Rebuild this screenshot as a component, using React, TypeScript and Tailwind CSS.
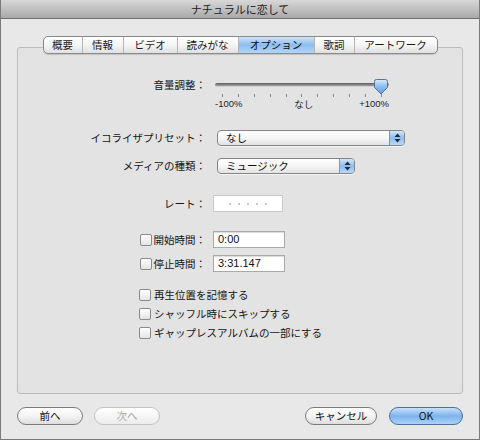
import React from "react";

const tabs = ["概要", "情報", "ビデオ", "読みがな", "オプション", "歌詞", "アートワーク"];
const tabWidths = [38, 41, 54, 61, 76, 40, 83];

function Checkbox() {
  return (
    <span className="inline-block w-[12px] h-[12px] shrink-0 rounded-[2px] border border-[#8a8a8a] bg-gradient-to-b from-white to-[#e4e4e4] shadow-[inset_0_1px_0_#fff]" />
  );
}

function Arrows() {
  return (
    <svg width="7" height="10" viewBox="0 0 7 10">
      <path d="M3.5 0.5 L6.5 4 H0.5 Z" fill="#1d2b3d" />
      <path d="M3.5 9.5 L6.5 6 H0.5 Z" fill="#1d2b3d" />
    </svg>
  );
}

function Popup({ width, value }: { width: string; value: string }) {
  return (
    <div className={`${width} h-[16px] flex rounded-[4px] border border-[#858585] bg-gradient-to-b from-white via-[#f6f6f6] to-[#e2e2e2] overflow-hidden shadow-[0_1px_0_#f5f5f5]`}>
      <span className="flex-1 pl-[8px] text-[10.5px] leading-[14px] text-[#111]">{value}</span>
      <span className="w-[15px] flex items-center justify-center border-l border-[#7d96b4] bg-gradient-to-b from-[#d3e6fa] via-[#8fbcec] to-[#b9d9f8]">
        <Arrows />
      </span>
    </div>
  );
}

function Knob() {
  return (
    <svg width="14" height="16" viewBox="0 0 14 16">
      <defs>
        <linearGradient id="kb" x1="0" y1="0" x2="0" y2="1">
          <stop offset="0" stopColor="#dcebfb" />
          <stop offset="0.5" stopColor="#8cbcee" />
          <stop offset="1" stopColor="#5c9de4" />
        </linearGradient>
      </defs>
      <path d="M2.5 0.5 H11.5 Q13.5 0.5 13.5 2.5 V8.5 L7 15 L0.5 8.5 V2.5 Q0.5 0.5 2.5 0.5 Z" fill="url(#kb)" stroke="#53739a" />
    </svg>
  );
}

function Button({ label, variant }: { label: string; variant?: "default" | "disabled" | "primary" }) {
  const base = "h-[18px] rounded-full flex items-center justify-center text-[10.5px] border";
  const cls =
    variant === "primary"
      ? "border-[#4f6f98] bg-gradient-to-b from-[#c8e1fa] via-[#7eb4ec] to-[#a9d2f8] text-[#111]"
      : variant === "disabled"
      ? "border-[#c4c4c4] bg-gradient-to-b from-white to-[#ececec] text-[#a8a8a8]"
      : "border-[#7b7b7b] bg-gradient-to-b from-white via-[#f4f4f4] to-[#dedede] text-[#111]";
  return <div className={`${base} ${cls}`}>{label}</div>;
}

export default function App() {
  return (
    <div className="w-[480px] h-[441px] bg-white font-['Noto_Sans_CJK_JP','Noto_Sans',sans-serif] text-[#141414]">
      <div className="h-[440px] flex flex-col border border-t-0 border-[#7a7a7a] bg-[#e8e8e8]">
        <div className="h-[19px] shrink-0 flex items-center justify-center bg-gradient-to-b from-[#d8d8d8] to-[#a9a9a9] border-b border-[#6f6f6f] text-[11px] text-[#222]">
          ナチュラルに恋して
        </div>

        <div className="px-[16px]">
          <div className="mt-[28px] h-[347px] rounded-[3px] border border-[#bdbdbd] bg-[#e3e3e3] flex flex-col">
            {/* tabs */}
            <div className="-mt-[12px] flex justify-center">
              <div className="flex h-[18px] rounded-[5px] border border-[#8a8a8a] overflow-hidden bg-gradient-to-b from-white via-[#f5f5f5] to-[#e0e0e0] shadow-[0_1px_1px_rgba(0,0,0,0.15)]">
                {tabs.map((t, i) => (
                  <div
                    key={t}
                    style={{ width: tabWidths[i] }}
                    className={`flex items-center justify-center text-[10.5px] ${i > 0 ? "border-l border-[#b5b5b5]" : ""} ${
                      t === "オプション" ? "bg-gradient-to-b from-[#cfe4fa] via-[#8dbdee] to-[#b3d6f8] text-[#0d0d0d]" : "text-[#1a1a1a]"
                    }`}
                  >
                    {t}
                  </div>
                ))}
              </div>
            </div>

            {/* volume */}
            <div className="mt-[23px] flex">
              <div className="w-[188px] h-[16px] flex items-center justify-end text-[10.5px]">音量調整：</div>
              <div className="ml-[9px] w-[174px] relative">
                <div className="h-[16px] flex items-center">
                  <div className="w-full h-[4px] rounded-full bg-gradient-to-b from-[#5d5d5d] to-[#a3a3a3] border-b border-[#d0d0d0]" />
                </div>
                <div className="absolute left-[159px] top-[2px]">
                  <Knob />
                </div>
                <div className="mt-[1px] flex justify-between px-[7px] h-[3px]">
                  {Array.from({ length: 11 }).map((_, i) => (
                    <span key={i} className="w-px h-[3px] bg-[#8a8a8a]" />
                  ))}
                </div>
                <div className="mt-[1px] flex justify-between items-center h-[13px] text-[9.5px] font-['Liberation_Sans',sans-serif] text-[#222]">
                  <span>-100%</span>
                  <span className="font-['Noto_Sans_CJK_JP',sans-serif] text-[9.5px] pl-[6px]">なし</span>
                  <span>+100%</span>
                </div>
              </div>
            </div>

            {/* equalizer */}
            <div className="mt-[19px] flex items-center">
              <div className="w-[188px] flex justify-end text-[10.5px]">イコライザプリセット：</div>
              <div className="ml-[11px]">
                <Popup width="w-[188px]" value="なし" />
              </div>
            </div>

            {/* media kind */}
            <div className="mt-[12px] flex items-center">
              <div className="w-[188px] flex justify-end text-[10.5px]">メディアの種類：</div>
              <div className="ml-[11px]">
                <Popup width="w-[138px]" value="ミュージック" />
              </div>
            </div>

            {/* rating */}
            <div className="mt-[21px] flex items-center">
              <div className="w-[188px] flex justify-end text-[10.5px]">レート：</div>
              <div className="ml-[7px] w-[70px] h-[17px] bg-white border border-[#c9c9c9] flex items-center justify-center gap-[7px]">
                {Array.from({ length: 5 }).map((_, i) => (
                  <span key={i} className="w-[2px] h-[2px] rounded-full bg-[#b5b5b5]" />
                ))}
              </div>
            </div>

            {/* start */}
            <div className="mt-[19px] flex items-center">
              <div className="w-[188px] flex items-center justify-end gap-[2px] text-[10.5px]">
                <Checkbox />
                <span>開始時間：</span>
              </div>
              <div className="ml-[7px] w-[72px] h-[17px] bg-white border border-[#a9a9a9] shadow-[inset_0_1px_1px_rgba(0,0,0,0.15)] flex items-center pl-[4px] text-[11px] font-['Liberation_Sans',sans-serif] text-[#111]">
                0:00
              </div>
            </div>

            {/* stop */}
            <div className="mt-[7px] flex items-center">
              <div className="w-[188px] flex items-center justify-end gap-[2px] text-[10.5px]">
                <Checkbox />
                <span>停止時間：</span>
              </div>
              <div className="ml-[7px] w-[72px] h-[17px] bg-white border border-[#a9a9a9] shadow-[inset_0_1px_1px_rgba(0,0,0,0.15)] flex items-center pl-[4px] text-[11px] font-['Liberation_Sans',sans-serif] text-[#111]">
                3:31.147
              </div>
            </div>

            {/* options */}
            <div className="mt-[16px] pl-[121px] flex flex-col gap-[5px] text-[10.5px]">
              <div className="h-[14px] flex items-center gap-[3px]">
                <Checkbox />
                <span>再生位置を記憶する</span>
              </div>
              <div className="h-[14px] flex items-center gap-[3px]">
                <Checkbox />
                <span>シャッフル時にスキップする</span>
              </div>
              <div className="h-[14px] flex items-center gap-[3px]">
                <Checkbox />
                <span>ギャップレスアルバムの一部にする</span>
              </div>
            </div>
          </div>

          {/* buttons */}
          <div className="mt-[13px] flex items-center">
            <div className="w-[66px]">
              <Button label="前へ" />
            </div>
            <div className="w-[66px] ml-[11px]">
              <Button label="次へ" variant="disabled" />
            </div>
            <div className="flex-1" />
            <div className="w-[72px]">
              <Button label="キャンセル" />
            </div>
            <div className="w-[74px] ml-[12px]">
              <Button label="OK" variant="primary" />
            </div>
          </div>
        </div>
      </div>
    </div>
  );
}
